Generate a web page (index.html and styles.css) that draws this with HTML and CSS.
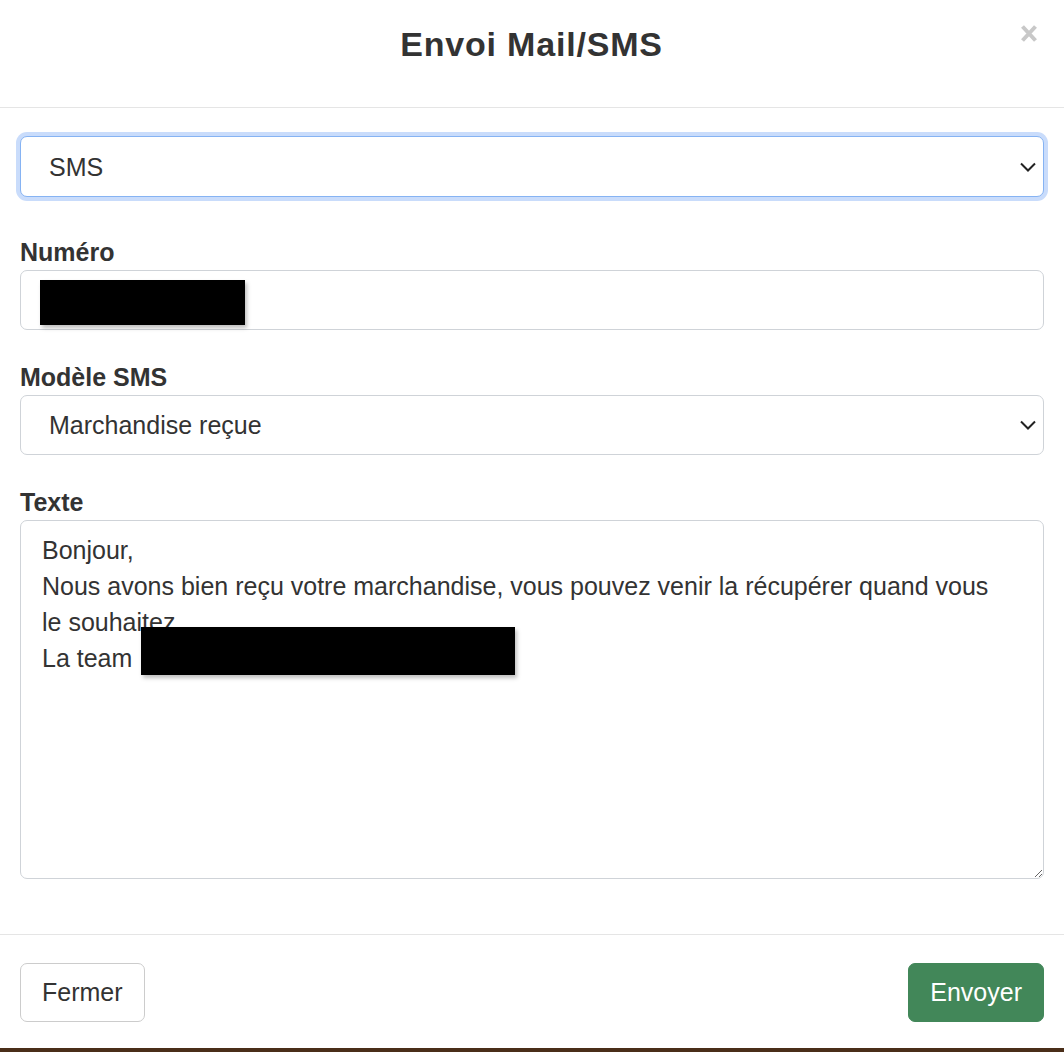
FILE: index.html
```html
<!DOCTYPE html>
<html lang="fr">
<head>
  <meta charset="UTF-8" />
  <meta name="viewport" content="width=device-width, initial-scale=1.0"/>
  <title>Envoi Mail/SMS</title>
  <link rel="stylesheet" href="styles.css">
</head>
<body>

<div class="modal">
  <div class="modal-header">
    <span></span>
    <h1 class="modal-title">Envoi Mail/SMS</h1>
    <button type="button" class="close" aria-label="Fermer">
      <svg width="16" height="17" viewBox="0 0 16 17">
        <path d="M1.5 1.5 L14.5 15.5 M14.5 1.5 L1.5 15.5" stroke="currentColor" stroke-width="4" fill="none"/>
      </svg>
    </button>
  </div>

  <form class="modal-body">
    <div class="form-group first">
      <div class="select-wrap">
        <select class="form-control focused" name="type">
          <option>SMS</option>
          <option>Mail</option>
        </select>
        <svg class="chevron" width="16" height="10" viewBox="0 0 16 10">
          <path d="M1 1.5 L8 8.5 L15 1.5" stroke="#222" stroke-width="2" fill="none"/>
        </svg>
      </div>
    </div>

    <div class="form-group">
      <label for="numero">Numéro</label>
      <div class="field-wrap">
        <input type="text" id="numero" class="form-control" value="" />
        <span class="redact redact-numero"></span>
      </div>
    </div>

    <div class="form-group">
      <label for="modele">Modèle SMS</label>
      <div class="select-wrap">
        <select id="modele" class="form-control">
          <option>Marchandise reçue</option>
        </select>
        <svg class="chevron" width="16" height="10" viewBox="0 0 16 10">
          <path d="M1 1.5 L8 8.5 L15 1.5" stroke="#222" stroke-width="2" fill="none"/>
        </svg>
      </div>
    </div>

    <div class="form-group last">
      <label for="texte">Texte</label>
      <div class="field-wrap">
        <textarea id="texte" class="form-control">Bonjour,
Nous avons bien reçu votre marchandise, vous pouvez venir la récupérer quand vous le souhaitez.
La team</textarea>
        <span class="redact redact-texte"></span>
      </div>
    </div>
  </form>

  <div class="modal-footer">
    <button type="button" class="btn btn-default">Fermer</button>
    <button type="button" class="btn btn-success">Envoyer</button>
  </div>
</div>

</body>
</html>
```

FILE: styles.css
```css
html {
  background: #4a2e19;
}

body {
  font-family: 'Liberation Sans', Arial, sans-serif;
  color: #333;
  margin: 0;
}

.modal {
  background: #fff;
  height: 1048px;
  box-sizing: border-box;
}

.modal-header {
  display: grid;
  grid-template-columns: 1fr auto 1fr;
  align-items: start;
  height: 108px;
  padding: 24px 27px 0 20px;
  box-sizing: border-box;
  border-bottom: 1px solid #e5e5e5;
}

.modal-title {
  margin: 0 0 0 6px;
  font-size: 34px;
  line-height: 40px;
  font-weight: bold;
  letter-spacing: 0.8px;
  color: #333;
}

.close {
  justify-self: end;
  margin-top: 1px;
  padding: 0;
  border: none;
  background: none;
  color: #c8c8c8;
  line-height: 0;
}

.modal-body {
  padding: 28px 20px 55px;
  border-bottom: 1px solid #e5e5e5;
}

.form-group {
  margin-bottom: 29px;
}

.form-group.first {
  margin-bottom: 37px;
}

.form-group.last {
  margin-bottom: 0;
}

label {
  display: block;
  font-size: 25px;
  line-height: 36px;
  font-weight: bold;
  color: #333;
}

.form-control {
  display: block;
  width: 100%;
  box-sizing: border-box;
  height: 60px;
  margin: 0;
  padding: 0 18px;
  font-family: inherit;
  font-size: 25px;
  color: #333;
  background: #fff;
  border: 1px solid #cfd3d8;
  border-radius: 7px;
}

select.form-control {
  -webkit-appearance: none;
  appearance: none;
  padding-left: 28px;
}

select.focused {
  height: 61px;
  border-color: #86b3f3;
  box-shadow: 0 0 0 4px #c9dcfb;
  outline: none;
}

.select-wrap,
.field-wrap {
  position: relative;
}

.chevron {
  position: absolute;
  right: 8px;
  top: 50%;
  margin-top: -5px;
  pointer-events: none;
}

textarea.form-control {
  height: 359px;
  padding: 11px 34px 10px 21px;
  line-height: 36px;
  resize: vertical;
}

.redact {
  position: absolute;
  background: #000;
  box-shadow: 2px 3px 4px rgba(0,0,0,0.25);
}

.redact-numero {
  left: 20px;
  top: 10px;
  width: 205px;
  height: 45px;
}

.redact-texte {
  left: 121px;
  top: 107px;
  width: 374px;
  height: 48px;
}

.modal-footer {
  display: flex;
  justify-content: space-between;
  padding: 28px 20px 26px;
}

.btn {
  height: 59px;
  padding: 0 21px;
  font-family: inherit;
  font-size: 25px;
  border-radius: 7px;
  cursor: pointer;
}

.btn-default {
  background: #fff;
  color: #333;
  border: 1px solid #ccc;
}

.btn-success {
  background: #428759;
  color: #fff;
  border: 1px solid #428759;
}
```
